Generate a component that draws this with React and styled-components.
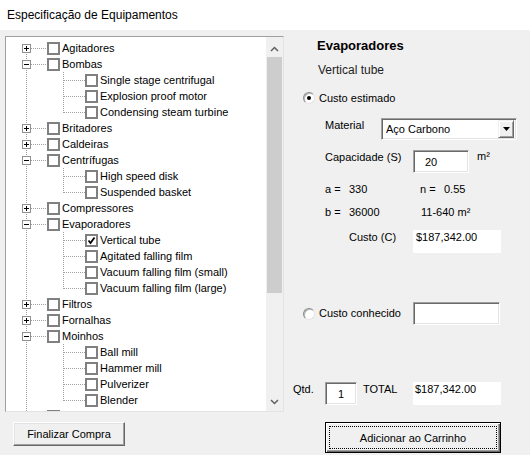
import styled, { createGlobalStyle } from 'styled-components';

const GlobalStyle = createGlobalStyle`
  html, body {
    margin: 0;
    padding: 0;
    background: #f0f0f0;
  }
  body {
    font-family: "Liberation Sans", Arial, sans-serif;
    font-size: 11px;
    color: #000;
  }
`;

// the last root is scrolled out of view: only the top of its checkbox shows
const tree = [
  { label: 'Agitadores' },
  { label: 'Bombas', children: ['Single stage centrifugal', 'Explosion proof motor', 'Condensing steam turbine'] },
  { label: 'Britadores' },
  { label: 'Caldeiras' },
  { label: 'Centrífugas', children: ['High speed disk', 'Suspended basket'] },
  { label: 'Compressores' },
  {
    label: 'Evaporadores',
    children: ['Vertical tube', 'Agitated falling film', 'Vacuum falling film (small)', 'Vacuum falling film (large)'],
  },
  { label: 'Filtros' },
  { label: 'Fornalhas' },
  { label: 'Moinhos', children: ['Ball mill', 'Hammer mill', 'Pulverizer', 'Blender'] },
  { label: '' },
];

const checked = ['Vertical tube'];

// flatten the tree into visible rows
const rows = tree.flatMap((node, i) => {
  const root = { kind: 'root', label: node.label, first: i === 0, open: !!node.children };
  const kids = (node.children || []).map((c, j, arr) => ({
    kind: 'child',
    label: c,
    last: j === arr.length - 1,
  }));
  return [root, ...kids];
});

const Window = styled.div`
  width: 530px;
  height: 455px;
  overflow: hidden;
  display: flex;
  flex-direction: column;
  background: #f0f0f0;
`;

const TitleBar = styled.div`
  height: 30px;
  flex-shrink: 0;
  background: #fff;
  display: flex;
  align-items: center;
  padding-left: 7px;
  font-size: 12px;
`;

const Body = styled.div`
  display: flex;
  padding-top: 6px;
`;

const LeftCol = styled.div`
  margin-left: 5px;
  width: 279px;
  display: flex;
  flex-direction: column;
`;

const TreeBox = styled.div`
  height: 376px;
  box-sizing: border-box;
  border: 1px solid;
  border-color: #a0a0a0 #e3e3e3 #e3e3e3 #a0a0a0;
  background: #fff;
  display: flex;
  overflow: hidden;
`;

const TreeList = styled.div`
  flex: 1;
  padding-top: 3px;
  overflow: hidden;
`;

const TreeRow = styled.div`
  display: flex;
  align-items: center;
  height: 16px;
  white-space: nowrap;
`;

const CheckBox = styled.span`
  width: 13px;
  height: 13px;
  box-sizing: border-box;
  border: 2px solid #808080;
  background: #fff;
  flex-shrink: 0;
  display: flex;
  align-items: center;
  justify-content: center;
`;

const ItemLabel = styled.span`
  margin-left: 2px;
  line-height: 16px;
`;

const ScrollBar = styled.div`
  width: 17px;
  background: #f0f0f0;
  display: flex;
  flex-direction: column;
`;

const ScrollArrow = styled.div`
  height: 20px;
  display: flex;
  justify-content: center;
  align-items: ${p => (p.$down ? 'flex-end' : 'flex-start')};
  padding: ${p => (p.$down ? '0 0 6px' : '9px 0 0')};
  box-sizing: border-box;
`;

const Track = styled.div`
  flex: 1;
`;

const Thumb = styled.div`
  margin: 0 1px;
  height: 236px;
  background: #cdcdcd;
`;

const Button = styled.button`
  box-sizing: border-box;
  width: ${p => p.$w}px;
  height: ${p => p.$h}px;
  margin-top: ${p => p.$mt}px;
  margin-left: ${p => p.$ml}px;
  padding: 0;
  position: relative;
  background: #f0f0f0;
  font-family: inherit;
  font-size: 11px;
  color: #000;
  border: 1px solid;
  border-color: ${p => (p.$default ? '#000' : '#fff #696969 #696969 #fff')};
  box-shadow: ${p =>
    p.$default
      ? 'inset 1px 1px 0 #fff, inset -1px -1px 0 #696969, inset -2px -2px 0 #a0a0a0'
      : 'inset -1px -1px 0 #a0a0a0, inset 1px 1px 0 #e3e3e3'};

  &::after {
    content: '';
    display: ${p => (p.$default ? 'block' : 'none')};
    position: absolute;
    inset: 3px;
    border: 1px dotted #000;
  }
`;

const RightPanel = styled.div`
  margin-left: 9px;
  width: 237px;
  display: flex;
  flex-direction: column;
`;

const Heading = styled.div`
  margin-top: 2px;
  padding-left: 24px;
  height: 16px;
  line-height: 16px;
  font-size: 13px;
  font-weight: bold;
`;

const SubHeading = styled.div`
  margin-top: 8px;
  padding-left: 25px;
  height: 16px;
  line-height: 16px;
  font-size: 12px;
  color: #1e1e1e;
`;

const FieldRow = styled.div`
  display: flex;
  align-items: ${p => (p.$center ? 'center' : 'flex-start')};
  margin-top: ${p => p.$mt}px;
  padding-left: ${p => p.$pl || 0}px;
  height: ${p => p.$h || 16}px;
  white-space: nowrap;
`;

const Cell = styled.span`
  width: ${p => (p.$w ? `${p.$w}px` : 'auto')};
  flex-shrink: 0;
  line-height: 13px;
  padding-top: ${p => p.$pt || 0}px;
  margin-left: ${p => p.$ml || 0}px;
`;

const Radio = styled.span`
  width: 12px;
  height: 12px;
  box-sizing: border-box;
  border-radius: 50%;
  background: #fff;
  border: 1px solid;
  border-color: #8a8a8a #e3e3e3 #e3e3e3 #8a8a8a;
  box-shadow: inset 1px 1px 0 #b5b5b5;
  display: flex;
  align-items: center;
  justify-content: center;
  margin-right: 4px;
  flex-shrink: 0;

  &::after {
    content: '';
    width: 4px;
    height: 4px;
    border-radius: 50%;
    background: ${p => (p.$checked ? '#000' : 'transparent')};
  }
`;

const Sunken = styled.div`
  box-sizing: border-box;
  width: ${p => p.$w}px;
  height: ${p => p.$h || 23}px;
  background: #fff;
  border: 1px solid;
  border-color: #a0a0a0 #fff #fff #a0a0a0;
  box-shadow: inset 1px 1px 0 #696969, inset -1px -1px 0 #e3e3e3;
  display: flex;
  align-items: center;
  justify-content: ${p => (p.$centered ? 'center' : 'flex-start')};
  padding-left: ${p => p.$pl || 0}px;
  flex-shrink: 0;
`;

const DropButton = styled.span`
  margin-left: auto;
  margin-right: 2px;
  width: 16px;
  height: 18px;
  box-sizing: border-box;
  background: #f0f0f0;
  border: 1px solid;
  border-color: #f0f0f0 #696969 #696969 #f0f0f0;
  box-shadow: inset 1px 1px 0 #fff, inset -1px -1px 0 #a0a0a0;
  display: flex;
  align-items: center;
  justify-content: center;
`;

const ValueBox = styled.div`
  box-sizing: border-box;
  width: 88px;
  height: 23px;
  background: #fff;
  padding: 1px 0 0 ${p => p.$pl || 3}px;
  line-height: 13px;
  flex-shrink: 0;
`;

const dots = { stroke: '#a0a0a0', strokeDasharray: '1 1', shapeRendering: 'crispEdges' };

function Gutter({ row }) {
  if (row.kind === 'root') {
    return (
      <svg width="41" height="16" style={{ flexShrink: 0 }}>
        <line x1="20.5" y1={row.first ? 8 : 0} x2="20.5" y2="16" {...dots} />
        <line x1="25" y1="8.5" x2="41" y2="8.5" {...dots} />
        <rect x="16.5" y="4.5" width="8" height="8" fill="#fff" stroke="#919191" shapeRendering="crispEdges" />
        <line x1="18" y1="8.5" x2="23" y2="8.5" stroke="#000" shapeRendering="crispEdges" />
        {!row.open && <line x1="20.5" y1="6" x2="20.5" y2="11" stroke="#000" shapeRendering="crispEdges" />}
      </svg>
    );
  }
  return (
    <svg width="79" height="16" style={{ flexShrink: 0 }}>
      <line x1="20.5" y1="0" x2="20.5" y2="16" {...dots} />
      <line x1="57.5" y1="0" x2="57.5" y2={row.last ? 9 : 16} {...dots} />
      <line x1="58" y1="8.5" x2="79" y2="8.5" {...dots} />
    </svg>
  );
}

function Tree() {
  return (
    <TreeBox>
      <TreeList>
        {rows.map((row, i) => (
          <TreeRow key={i}>
            <Gutter row={row} />
            <CheckBox>
              {checked.includes(row.label) && (
                <svg width="9" height="9">
                  <polyline points="1.5,4.5 3.5,7 7.5,1.5" fill="none" stroke="#000" strokeWidth="1.8" />
                </svg>
              )}
            </CheckBox>
            {row.label && <ItemLabel>{row.label}</ItemLabel>}
          </TreeRow>
        ))}
      </TreeList>
      <ScrollBar>
        <ScrollArrow>
          <svg width="9" height="6">
            <polyline points="1,5 4.5,1.5 8,5" fill="none" stroke="#606060" strokeWidth="1.5" />
          </svg>
        </ScrollArrow>
        <Track>
          <Thumb />
        </Track>
        <ScrollArrow $down>
          <svg width="9" height="6">
            <polyline points="1,1 4.5,4.5 8,1" fill="none" stroke="#606060" strokeWidth="1.5" />
          </svg>
        </ScrollArrow>
      </ScrollBar>
    </TreeBox>
  );
}

export default function App() {
  return (
    <Window>
      <GlobalStyle />
      <TitleBar>Especificação de Equipamentos</TitleBar>
      <Body>
        <LeftCol>
          <Tree />
          <Button $w={112} $h={24} $mt={10} $ml={8}>
            Finalizar Compra
          </Button>
        </LeftCol>

        <RightPanel>
          <Heading>Evaporadores</Heading>
          <SubHeading>Vertical tube</SubHeading>

          <FieldRow $mt={12} $pl={10} $center>
            <Radio $checked />
            <Cell>Custo estimado</Cell>
          </FieldRow>

          <FieldRow $mt={12} $pl={32} $h={22}>
            <Cell $w={56} $pt={1}>Material</Cell>
            <Sunken $w={136} $h={22} $pl={4}>
              Aço Carbono
              <DropButton>
                <svg width="7" height="4">
                  <polygon points="0,0 7,0 3.5,4" fill="#000" />
                </svg>
              </DropButton>
            </Sunken>
          </FieldRow>

          <FieldRow $mt={10} $pl={32} $h={23}>
            <Cell $w={88} $pt={1}>Capacidade (S)</Cell>
            <Sunken $w={56} $pl={11}>20</Sunken>
            <Cell $ml={8}>m²</Cell>
          </FieldRow>

          <FieldRow $mt={8} $pl={32} $center>
            <Cell $w={24}>a =</Cell>
            <Cell $w={71}>330</Cell>
            <Cell $w={24}>n =</Cell>
            <Cell>0.55</Cell>
          </FieldRow>

          <FieldRow $mt={7} $pl={32} $center>
            <Cell $w={24}>b =</Cell>
            <Cell $w={72}>36000</Cell>
            <Cell>11-640 m²</Cell>
          </FieldRow>

          <FieldRow $mt={10} $pl={56} $h={23}>
            <Cell $w={64} $pt={1}>Custo (C)</Cell>
            <ValueBox>$187,342.00</ValueBox>
          </FieldRow>

          <FieldRow $mt={49} $pl={10} $h={23} $center>
            <Radio />
            <Cell $w={94}>Custo conhecido</Cell>
            <Sunken $w={87} />
          </FieldRow>

          <FieldRow $mt={57} $h={23}>
            <Cell $w={32} $pt={1}>Qtd.</Cell>
            <Sunken $w={32} $centered>1</Sunken>
            <Cell $w={50} $pt={1} $ml={6}>TOTAL</Cell>
            <ValueBox $pl={2}>$187,342.00</ValueBox>
          </FieldRow>

          <Button $default $w={176} $h={31} $mt={17} $ml={32}>
            Adicionar ao Carrinho
          </Button>
        </RightPanel>
      </Body>
    </Window>
  );
}
